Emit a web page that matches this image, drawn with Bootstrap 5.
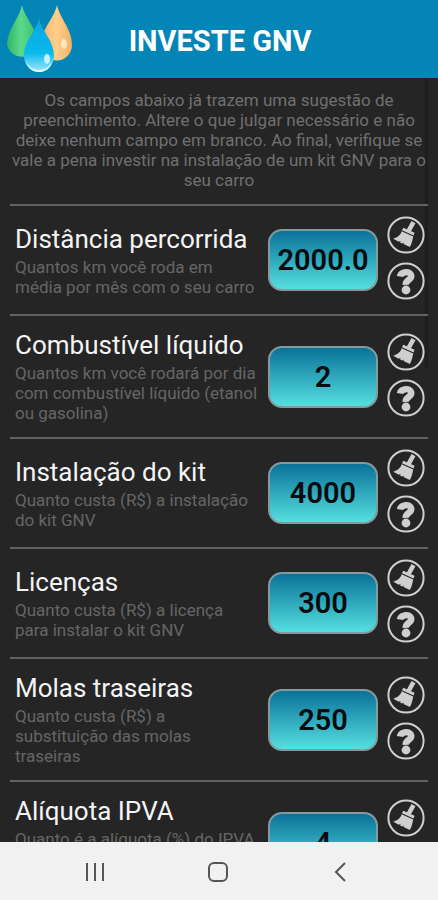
<!DOCTYPE html>
<html lang="pt-BR">
<head>
<meta charset="utf-8">
<meta name="viewport" content="width=device-width, initial-scale=1">
<title>Investe GNV</title>
<link href="https://cdn.jsdelivr.net/npm/bootstrap@5.3.0/dist/css/bootstrap.min.css" rel="stylesheet">
<style>
  body { background: #252525; font-family: Roboto, "Liberation Sans", sans-serif; }
  .app-bar { background: #0385b7; height: 78px; }
  .app-logo { width: 68px; height: 72px; margin-left: 6px; }
  .app-title { font-size: 29px; line-height: 36px; padding-top: 4px; font-weight: 700; color: #fff; }
  .app-bar-end { width: 72px; }
  .form-area { min-height: 0; padding: 12px 10px 0; }
  .scroll-thumb { top: 0; right: 10px; width: 3px; height: 290px; background: #1e1e1e; z-index: -1; }
  .intro { font-size: 17px; line-height: 20px; color: #707070; padding-bottom: 14px; margin: 0 -2px; }
  .field-row { border-top: 2px solid #626262; padding-left: 5px; }
  .field-text { padding: 12px 9px 14px 0; min-width: 0; }
  .field-name { font-size: 26px; line-height: 35px; color: #f4f4f4; }
  .field-help { font-size: 17px; line-height: 20px; color: #666; }
  .three-lines { min-height: 60px; }
  .field-value { width: 110px; height: 62px; border: 2px solid #829aa0; border-radius: 14px; background: linear-gradient(#0a7299, #55dfdf); color: #080c0e; font-size: 29px; font-weight: 600; }
  .field-tools { padding: 10px 3px 14px 9px; }
  .tool-btn { width: 38px; height: 38px; color: #cfcfcf; }
  .sys-nav { background: #f1f1f1; height: 58px; padding: 0 35px 0 33px; }
</style>
</head>
<body>
<svg class="d-none" aria-hidden="true">
  <symbol id="brush" viewBox="0 0 38 38">
    <circle cx="19" cy="19" r="17.6" fill="none" stroke="currentColor" stroke-width="2"/>
    <path d="M24.500 5l4 2.200-4.800 8.600-4-2z" fill="currentColor"/>
    <path d="M16.300 11.800l11.300 5-1 2.700-11.600-5.200z" fill="currentColor"/>
    <path d="M14.600 15.300l11.600 5.200c-.8 3.500-1.200 7-3.400 10.500l-6.300-2.900.6-1.600-1.900 1-2.200-1 .7-1.700-1.900.9-5.600-2.900c3.800-1.300 7.500-3.400 8.400-7.500z" fill="currentColor"/>
  </symbol>
  <symbol id="question" viewBox="0 0 38 38">
    <circle cx="19" cy="19" r="17.6" fill="none" stroke="currentColor" stroke-width="2"/>
    <path d="M13 14.500c.6-5 10.400-6.200 11.200-1 .7 4.600-5.700 4.200-5.500 9.300" fill="none" stroke="currentColor" stroke-width="6.500"/>
    <circle cx="19" cy="28" r="4.400" fill="currentColor"/>
  </symbol>
</svg>
<div class="vh-100 d-flex flex-column overflow-hidden">
  <header class="app-bar d-flex align-items-center flex-shrink-0">
    <svg class="app-logo flex-shrink-0" viewBox="0 0 68 72" aria-hidden="true">
      <defs>
        <linearGradient id="green" x1="0" x2="1"><stop offset="0" stop-color="#2eb563"/><stop offset=".45" stop-color="#5cd98b"/><stop offset="1" stop-color="#35bd67"/></linearGradient>
        <linearGradient id="amber" x1="0" x2="1"><stop offset="0" stop-color="#f2b668"/><stop offset=".5" stop-color="#ffcf8b"/><stop offset="1" stop-color="#efb266"/></linearGradient>
        <linearGradient id="water" x1="0" y1="0" x2="0" y2="1"><stop offset="0" stop-color="#08a5e2"/><stop offset=".65" stop-color="#0ab9ed"/><stop offset="1" stop-color="#a0e8fb"/></linearGradient>
      </defs>
      <path d="M16 2C19 16 32 26 32 42a16 15.500 0 0 1-31 0C1 27 13 16 16 2z" fill="url(#green)"/>
      <path d="M51 2c3 14 15 24 15 40a15.500 15.500 0 0 1-31 0C35 26 48 16 51 2z" fill="url(#amber)"/>
      <ellipse cx="58" cy="41" rx="3" ry="5" fill="#ffe5c0"/>
      <path d="M33 15c2 13 15 22 15 38a15 16 0 0 1-30 0C18 37 31 28 33 15z" fill="url(#water)"/>
      <path d="M20 57c2 7 7 10 13 10s11-3 13-9c-1 7-6 11-13 11s-12-4-13-12z" fill="#e2fbff"/>
      <ellipse cx="41" cy="56" rx="3" ry="5" fill="#c4f3ff"/>
    </svg>
    <h1 class="app-title flex-grow-1 text-center mb-0">INVESTE GNV</h1>
    <div class="app-bar-end"></div>
  </header>

  <main class="form-area flex-grow-1 overflow-hidden position-relative z-0">
    <div class="scroll-thumb position-absolute"></div>
    <p class="intro text-center mb-0">Os campos abaixo já trazem uma sugestão de preenchimento. Altere o que julgar necessário e não deixe nenhum campo em branco. Ao final, verifique se vale a pena investir na instalação de um kit GNV para o seu carro</p>
    <form>
      <div class="field-row d-flex align-items-center">
        <div class="field-text flex-grow-1"><label class="field-name d-block" for="distancia">Distância percorrida</label><div class="field-help">Quantos km você roda em média por mês com o seu carro</div></div>
        <input class="field-value flex-shrink-0 text-center p-0" id="distancia" type="text" value="2000.0">
        <div class="field-tools d-flex flex-column gap-2">
          <button class="tool-btn btn p-0 border-0 d-flex" type="button" aria-label="Limpar"><svg class="w-100 h-100"><use href="#brush"/></svg></button>
          <button class="tool-btn btn p-0 border-0 d-flex" type="button" aria-label="Ajuda"><svg class="w-100 h-100"><use href="#question"/></svg></button>
        </div>
      </div>
      <div class="field-row d-flex align-items-center">
        <div class="field-text flex-grow-1"><label class="field-name d-block" for="combustivel">Combustível líquido</label><div class="field-help">Quantos km você rodará por dia com combustível líquido (etanol ou gasolina)</div></div>
        <input class="field-value flex-shrink-0 text-center p-0" id="combustivel" type="text" value="2">
        <div class="field-tools d-flex flex-column gap-2">
          <button class="tool-btn btn p-0 border-0 d-flex" type="button" aria-label="Limpar"><svg class="w-100 h-100"><use href="#brush"/></svg></button>
          <button class="tool-btn btn p-0 border-0 d-flex" type="button" aria-label="Ajuda"><svg class="w-100 h-100"><use href="#question"/></svg></button>
        </div>
      </div>
      <div class="field-row d-flex align-items-center">
        <div class="field-text flex-grow-1"><label class="field-name d-block" for="instalacao">Instalação do kit</label><div class="field-help">Quanto custa (R$) a instalação do kit GNV</div></div>
        <input class="field-value flex-shrink-0 text-center p-0" id="instalacao" type="text" value="4000">
        <div class="field-tools d-flex flex-column gap-2">
          <button class="tool-btn btn p-0 border-0 d-flex" type="button" aria-label="Limpar"><svg class="w-100 h-100"><use href="#brush"/></svg></button>
          <button class="tool-btn btn p-0 border-0 d-flex" type="button" aria-label="Ajuda"><svg class="w-100 h-100"><use href="#question"/></svg></button>
        </div>
      </div>
      <div class="field-row d-flex align-items-center">
        <div class="field-text flex-grow-1"><label class="field-name d-block" for="licencas">Licenças</label><div class="field-help">Quanto custa (R$) a licença para instalar o kit GNV</div></div>
        <input class="field-value flex-shrink-0 text-center p-0" id="licencas" type="text" value="300">
        <div class="field-tools d-flex flex-column gap-2">
          <button class="tool-btn btn p-0 border-0 d-flex" type="button" aria-label="Limpar"><svg class="w-100 h-100"><use href="#brush"/></svg></button>
          <button class="tool-btn btn p-0 border-0 d-flex" type="button" aria-label="Ajuda"><svg class="w-100 h-100"><use href="#question"/></svg></button>
        </div>
      </div>
      <div class="field-row d-flex align-items-center">
        <div class="field-text flex-grow-1"><label class="field-name d-block" for="molas">Molas traseiras</label><div class="field-help">Quanto custa (R$) a substituição das molas traseiras</div></div>
        <input class="field-value flex-shrink-0 text-center p-0" id="molas" type="text" value="250">
        <div class="field-tools d-flex flex-column gap-2">
          <button class="tool-btn btn p-0 border-0 d-flex" type="button" aria-label="Limpar"><svg class="w-100 h-100"><use href="#brush"/></svg></button>
          <button class="tool-btn btn p-0 border-0 d-flex" type="button" aria-label="Ajuda"><svg class="w-100 h-100"><use href="#question"/></svg></button>
        </div>
      </div>
      <div class="field-row d-flex align-items-center">
        <div class="field-text flex-grow-1"><label class="field-name d-block" for="ipva">Alíquota IPVA</label><div class="field-help three-lines">Quanto é a alíquota (%) do IPVA</div></div>
        <input class="field-value flex-shrink-0 text-center p-0" id="ipva" type="text" value="4">
        <div class="field-tools d-flex flex-column gap-2">
          <button class="tool-btn btn p-0 border-0 d-flex" type="button" aria-label="Limpar"><svg class="w-100 h-100"><use href="#brush"/></svg></button>
          <button class="tool-btn btn p-0 border-0 d-flex" type="button" aria-label="Ajuda"><svg class="w-100 h-100"><use href="#question"/></svg></button>
        </div>
      </div>
    </form>
  </main>

  <nav class="sys-nav d-flex align-items-center flex-shrink-0" aria-label="Sistema">
    <div class="row g-0 w-100 text-center">
      <div class="col"><button class="btn p-0 border-0" type="button" aria-label="Recentes"><svg width="24" height="24" viewBox="0 0 24 24" fill="none" stroke="#555" stroke-width="2"><path d="M4 3v18M12 3v18M20 3v18"/></svg></button></div>
      <div class="col"><button class="btn p-0 border-0" type="button" aria-label="Início"><svg width="24" height="24" viewBox="0 0 24 24" fill="none" stroke="#555" stroke-width="2"><rect x="3" y="3" width="18" height="18" rx="5"/></svg></button></div>
      <div class="col"><button class="btn p-0 border-0" type="button" aria-label="Voltar"><svg width="24" height="24" viewBox="0 0 24 24" fill="none" stroke="#555" stroke-width="2"><path d="M16 3l-9 9 9 9"/></svg></button></div>
    </div>
  </nav>
</div>
<script src="https://cdn.jsdelivr.net/npm/bootstrap@5.3.0/dist/js/bootstrap.bundle.min.js"></script>
</body>
</html>
